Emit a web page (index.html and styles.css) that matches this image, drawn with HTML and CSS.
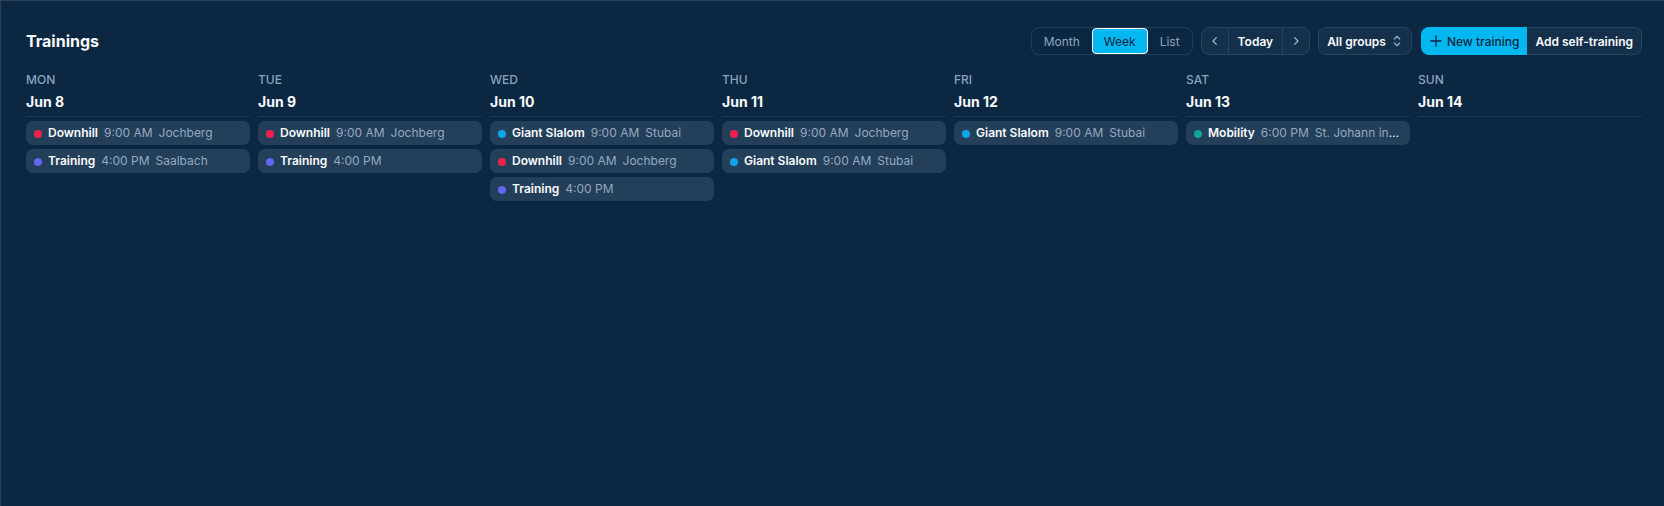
FILE: index.html
```html
<!DOCTYPE html>
<html lang="en">
<head>
<meta charset="utf-8">
<title>Trainings</title>
<link rel="stylesheet" href="styles.css">
</head>
<body>
<div class="panel">
  <div class="header">
    <h1 class="title">Trainings</h1>
    <div class="toolbar">
      <div class="seg">
        <span class="seg-btn">Month</span>
        <span class="seg-btn active">Week</span>
        <span class="seg-btn">List</span>
      </div>
      <div class="nav">
        <span class="nav-btn"><svg width="16" height="16" viewBox="0 0 24 24" fill="none" stroke="currentColor" stroke-width="1.6" stroke-linecap="round" stroke-linejoin="round"><path d="m14 17-5-5 5-5"/></svg></span>
        <span class="nav-today">Today</span>
        <span class="nav-btn"><svg width="16" height="16" viewBox="0 0 24 24" fill="none" stroke="currentColor" stroke-width="1.6" stroke-linecap="round" stroke-linejoin="round"><path d="m10 17 5-5-5-5"/></svg></span>
      </div>
      <div class="select">
        <span>All groups</span>
        <svg width="16" height="16" viewBox="0 0 24 24" fill="none" stroke="currentColor" stroke-width="2" stroke-linecap="round" stroke-linejoin="round"><path d="m8 15 4 4 4-4"/><path d="m8 9 4-4 4 4"/></svg>
      </div>
      <div class="actions">
        <span class="btn-primary"><svg width="12" height="12" viewBox="0 0 12 12" fill="none" stroke="currentColor" stroke-width="1.3" stroke-linecap="round"><path d="M1 6h10M6 1v10"/></svg>New training</span>
        <span class="btn-secondary">Add self-training</span>
      </div>
    </div>
  </div>

  <div class="week">
    <div class="day">
      <div class="dow">MON</div>
      <div class="date">Jun 8</div>
      <div class="events">
        <div class="event"><span class="dot red"></span><b>Downhill</b><span class="meta">9:00 AM</span><span class="meta">Jochberg</span></div>
        <div class="event"><span class="dot violet"></span><b>Training</b><span class="meta">4:00 PM</span><span class="meta">Saalbach</span></div>
      </div>
    </div>
    <div class="day">
      <div class="dow">TUE</div>
      <div class="date">Jun 9</div>
      <div class="events">
        <div class="event"><span class="dot red"></span><b>Downhill</b><span class="meta">9:00 AM</span><span class="meta">Jochberg</span></div>
        <div class="event"><span class="dot violet"></span><b>Training</b><span class="meta">4:00 PM</span></div>
      </div>
    </div>
    <div class="day">
      <div class="dow">WED</div>
      <div class="date">Jun 10</div>
      <div class="events">
        <div class="event"><span class="dot sky"></span><b>Giant Slalom</b><span class="meta">9:00 AM</span><span class="meta">Stubai</span></div>
        <div class="event"><span class="dot red"></span><b>Downhill</b><span class="meta">9:00 AM</span><span class="meta">Jochberg</span></div>
        <div class="event"><span class="dot violet"></span><b>Training</b><span class="meta">4:00 PM</span></div>
      </div>
    </div>
    <div class="day">
      <div class="dow">THU</div>
      <div class="date">Jun 11</div>
      <div class="events">
        <div class="event"><span class="dot red"></span><b>Downhill</b><span class="meta">9:00 AM</span><span class="meta">Jochberg</span></div>
        <div class="event"><span class="dot sky"></span><b>Giant Slalom</b><span class="meta">9:00 AM</span><span class="meta">Stubai</span></div>
      </div>
    </div>
    <div class="day">
      <div class="dow">FRI</div>
      <div class="date">Jun 12</div>
      <div class="events">
        <div class="event"><span class="dot sky"></span><b>Giant Slalom</b><span class="meta">9:00 AM</span><span class="meta">Stubai</span></div>
      </div>
    </div>
    <div class="day">
      <div class="dow">SAT</div>
      <div class="date">Jun 13</div>
      <div class="events">
        <div class="event"><span class="dot teal"></span><b>Mobility</b><span class="meta">6:00 PM</span><span class="meta">St. Johann in Tirol</span></div>
      </div>
    </div>
    <div class="day">
      <div class="dow">SUN</div>
      <div class="date">Jun 14</div>
      <div class="events"></div>
    </div>
  </div>
</div>
</body>
</html>
```

FILE: styles.css
```css
html, body {
  margin: 0;
  background: #0c2742;
}

body {
  font-family: Inter, "Noto Sans", "Liberation Sans", sans-serif;
  color: #f1f5f9;
}

.panel {
  box-sizing: border-box;
  min-height: 506px;
  border-top: 1px solid #2b4058;
  border-left: 1px solid #2b4058;
  padding: 26px 22px 0 25px;
}

.header {
  display: flex;
  align-items: center;
  justify-content: space-between;
  height: 28px;
}

.title {
  margin: 0;
  font-size: 16px;
  font-weight: 700;
  color: #f8fafc;
  line-height: 28px;
}

.toolbar {
  display: flex;
  align-items: center;
  gap: 8px;
}

.seg {
  display: flex;
  box-sizing: border-box;
  height: 28px;
  border: 1px solid #233e59;
  border-radius: 8px;
}

.seg-btn {
  display: flex;
  align-items: center;
  padding: 0 12px;
  font-size: 12px;
  color: #8ea6bf;
  border-radius: 4px;
}

.seg-btn.active {
  background: #03b8f0;
  color: #0c2640;
  border: 1px solid #ffffff;
  padding: 0 11px;
}

.nav {
  display: flex;
  box-sizing: border-box;
  height: 28px;
  background: #14304b;
  border: 1px solid #27425d;
  border-radius: 8px;
}

.nav-btn {
  display: flex;
  align-items: center;
  justify-content: center;
  width: 26px;
  color: #b4c4d4;
}

.nav-today {
  display: flex;
  align-items: center;
  padding: 0 9px;
  font-size: 12px;
  font-weight: 600;
  color: #f8fafc;
  border-left: 1px solid #27425d;
  border-right: 1px solid #27425d;
}

.select {
  display: flex;
  align-items: center;
  gap: 3px;
  box-sizing: border-box;
  height: 28px;
  padding: 0 6px 0 8px;
  background: #14304b;
  border: 1px solid #27425d;
  border-radius: 8px;
  font-size: 12px;
  font-weight: 600;
  color: #f8fafc;
}

.select svg {
  color: #8ea6bf;
}

.actions {
  display: flex;
  height: 28px;
  margin-left: 1px;
}

.btn-primary {
  display: flex;
  align-items: center;
  gap: 5px;
  padding: 0 8px 0 9px;
  background: #03b8f0;
  color: #0c2640;
  font-size: 12px;
  font-weight: 500;
  border-radius: 8px 0 0 8px;
}

.btn-secondary {
  display: flex;
  align-items: center;
  box-sizing: border-box;
  padding: 0 8px;
  background: #14304b;
  border: 1px solid #27425d;
  border-left: none;
  border-radius: 0 8px 8px 0;
  color: #f8fafc;
  font-size: 12px;
  font-weight: 600;
}

.week {
  display: grid;
  grid-template-columns: repeat(7, 1fr);
  gap: 8px;
  margin-top: 17px;
}

.day {
  min-width: 0;
}

.dow {
  font-size: 12px;
  line-height: 16px;
  font-weight: 500;
  color: #8aa3bf;
}

.date {
  margin-top: 4px;
  padding-bottom: 4px;
  border-bottom: 1px solid #1c3753;
  font-size: 14px;
  line-height: 20px;
  font-weight: 700;
  color: #f8fafc;
}

.events {
  display: flex;
  flex-direction: column;
  gap: 4px;
  margin-top: 4px;
}

.event {
  height: 24px;
  line-height: 24px;
  padding: 0 8px 0 8px;
  background: #233f5a;
  border-radius: 7px;
  font-size: 12px;
  white-space: nowrap;
  overflow: hidden;
  text-overflow: ellipsis;
}

.event b {
  font-weight: 600;
  color: #f8fafc;
}

.meta {
  margin-left: 6px;
  color: #94a9c0;
}

.dot {
  display: inline-block;
  width: 8px;
  height: 8px;
  border-radius: 50%;
  margin-right: 6px;
  vertical-align: -0.5px;
}

.red { background: #f0204f; }
.violet { background: #6366f1; }
.sky { background: #0ea5e9; }
.teal { background: #10a596; }
```
